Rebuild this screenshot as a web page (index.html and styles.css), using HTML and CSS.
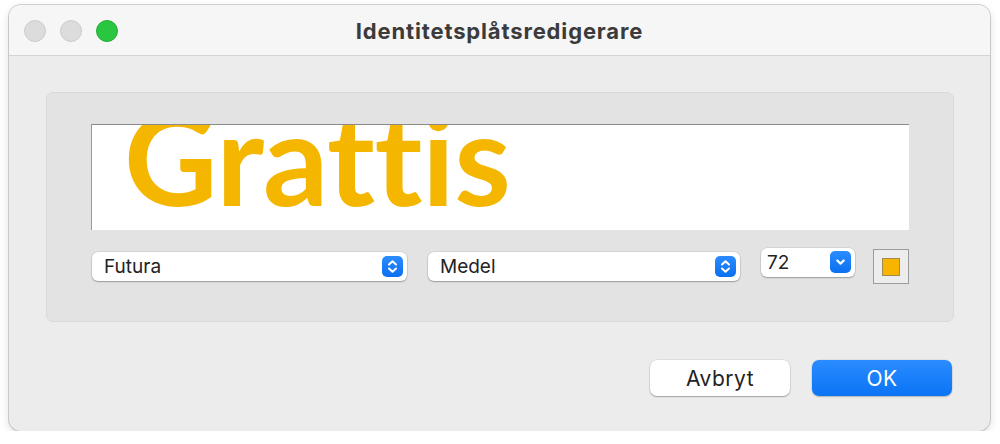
FILE: index.html
```html
<!DOCTYPE html>
<html lang="sv">
<head>
<meta charset="utf-8">
<title>Identitetsplåtsredigerare</title>
<link rel="stylesheet" href="styles.css">
</head>
<body>
<div class="window">
  <div class="titlebar">
    <div class="lights">
      <span class="light gray"></span>
      <span class="light gray"></span>
      <span class="light green"></span>
    </div>
    <div class="title">Identitetsplåtsredigerare</div>
    <div></div>
  </div>
  <div class="content">
    <div class="panel">
      <div class="field"><div class="sample">Grattis</div></div>
      <div class="controls">
        <div class="popup popup-font">
          <span class="label">Futura</span>
          <span class="stepper"><svg viewBox="0 0 21 21" width="21" height="21"><path d="M7 8.5 L10.5 5.2 L14 8.5 M7 12.5 L10.5 15.8 L14 12.5" fill="none" stroke="#fff" stroke-width="2" stroke-linecap="round" stroke-linejoin="round"/></svg></span>
        </div>
        <div class="popup popup-weight">
          <span class="label">Medel</span>
          <span class="stepper"><svg viewBox="0 0 21 21" width="21" height="21"><path d="M7 8.5 L10.5 5.2 L14 8.5 M7 12.5 L10.5 15.8 L14 12.5" fill="none" stroke="#fff" stroke-width="2" stroke-linecap="round" stroke-linejoin="round"/></svg></span>
        </div>
        <div class="combo">
          <span class="label">72</span>
          <span class="stepper stepper-down"><svg viewBox="0 0 21 22" width="21" height="22"><path d="M7.3 9.5 L10.5 12.6 L13.7 9.5" fill="none" stroke="#fff" stroke-width="2.2" stroke-linecap="round" stroke-linejoin="round"/></svg></span>
        </div>
        <div class="well"><span class="swatch"></span></div>
      </div>
    </div>
    <div class="buttons">
      <button class="btn btn-cancel">Avbryt</button>
      <button class="btn btn-ok">OK</button>
    </div>
  </div>
</div>
</body>
</html>
```
FILE: styles.css
```css
html, body {
  margin: 0;
  background: #ffffff;
}
body {
  padding: 5px 0 0 9px;
  font-family: Inter, "Liberation Sans", sans-serif;
}
.window {
  width: 981px;
  height: 426px;
  box-sizing: border-box;
  border-radius: 12px;
  background: #ececec;
  overflow: hidden;
  box-shadow: 0 0 0 1px rgba(0,0,0,0.16), 0 3px 10px rgba(0,0,0,0.14);
}
.titlebar {
  height: 51px;
  box-sizing: border-box;
  background: #f6f6f6;
  border-bottom: 1px solid #d4d4d4;
  display: grid;
  grid-template-columns: 1fr auto 1fr;
  align-items: center;
}
.lights {
  display: flex;
  gap: 14px;
  padding-left: 15px;
  padding-top: 2px;
}
.light {
  width: 22px;
  height: 22px;
  border-radius: 50%;
  box-sizing: border-box;
}
.light.gray {
  background: #dcdcdc;
  border: 1px solid #cdcdcd;
}
.light.green {
  background: #2ac640;
  border: 1px solid #22ad35;
}
.title {
  font-size: 22px;
  font-weight: 700;
  color: #3b3b3b;
  padding-top: 1px;
  letter-spacing: 0.85px;
}
.content {
  padding: 36px 36px 0 37px;
}
.panel {
  height: 230px;
  box-sizing: border-box;
  background: #e3e3e3;
  border: 1px solid #dadada;
  border-radius: 7px;
  padding: 31px 44px 0 44px;
}
.field {
  width: 818px;
  height: 106px;
  box-sizing: border-box;
  background: #ffffff;
  border-top: 1px solid #8a8a8a;
  border-left: 1px solid #9a9a9a;
  overflow: hidden;
}
.sample {
  font-family: Lato, "Noto Sans", sans-serif;
  font-weight: 700;
  font-size: 129px;
  line-height: 1;
  color: #f5b600;
  margin-top: -33px;
  padding-left: 32px;
  white-space: nowrap;
  letter-spacing: -0.5px;
}
.controls {
  display: flex;
  align-items: flex-start;
  margin-top: 18px;
  padding-left: 1px;
}
.popup, .combo {
  height: 29px;
  box-sizing: border-box;
  background: #ffffff;
  border-radius: 6px;
  box-shadow: 0 0 0 0.5px rgba(0,0,0,0.12), 0 1px 1.5px rgba(0,0,0,0.28);
  display: flex;
  align-items: center;
  justify-content: space-between;
  padding: 0 4px 0 12px;
}
.popup {
  margin-top: 4px;
}
.popup-font {
  width: 315px;
}
.popup-weight {
  width: 312px;
  margin-left: 21px;
}
.combo {
  width: 94px;
  margin-left: 21px;
  padding-left: 6px;
}
.label {
  font-size: 19px;
  color: #222222;
}
.stepper {
  width: 21px;
  height: 21px;
  border-radius: 5px;
  background: linear-gradient(#2a8cff, #0a70f0);
  display: flex;
}
.stepper-down {
  height: 22px;
  margin-top: -1px;
}
.well {
  width: 36px;
  height: 35px;
  box-sizing: border-box;
  margin-left: 18px;
  margin-top: 1px;
  border: 1px solid #9b9b9b;
  background: #ededed;
  display: flex;
  align-items: center;
  justify-content: center;
}
.swatch {
  width: 18px;
  height: 18px;
  box-sizing: border-box;
  background: #f7b500;
  border: 1px solid #a28a55;
}
.buttons {
  display: flex;
  justify-content: flex-end;
  gap: 22px;
  margin-top: 38px;
  padding-right: 2px;
}
.btn {
  width: 140px;
  height: 36px;
  border-radius: 7px;
  border: none;
  font-family: Inter, "Liberation Sans", sans-serif;
  font-size: 21px;
  letter-spacing: 0.5px;
  padding: 0;
}
.btn-cancel {
  background: #ffffff;
  color: #222222;
  box-shadow: 0 0 0 0.5px rgba(0,0,0,0.12), 0 1px 1.5px rgba(0,0,0,0.28);
}
.btn-ok {
  background: linear-gradient(#2a8cff, #0a74f4);
  color: #ffffff;
  box-shadow: 0 0 0 0.5px rgba(0,0,0,0.1), 0 1px 1.5px rgba(0,0,0,0.2);
}
```
